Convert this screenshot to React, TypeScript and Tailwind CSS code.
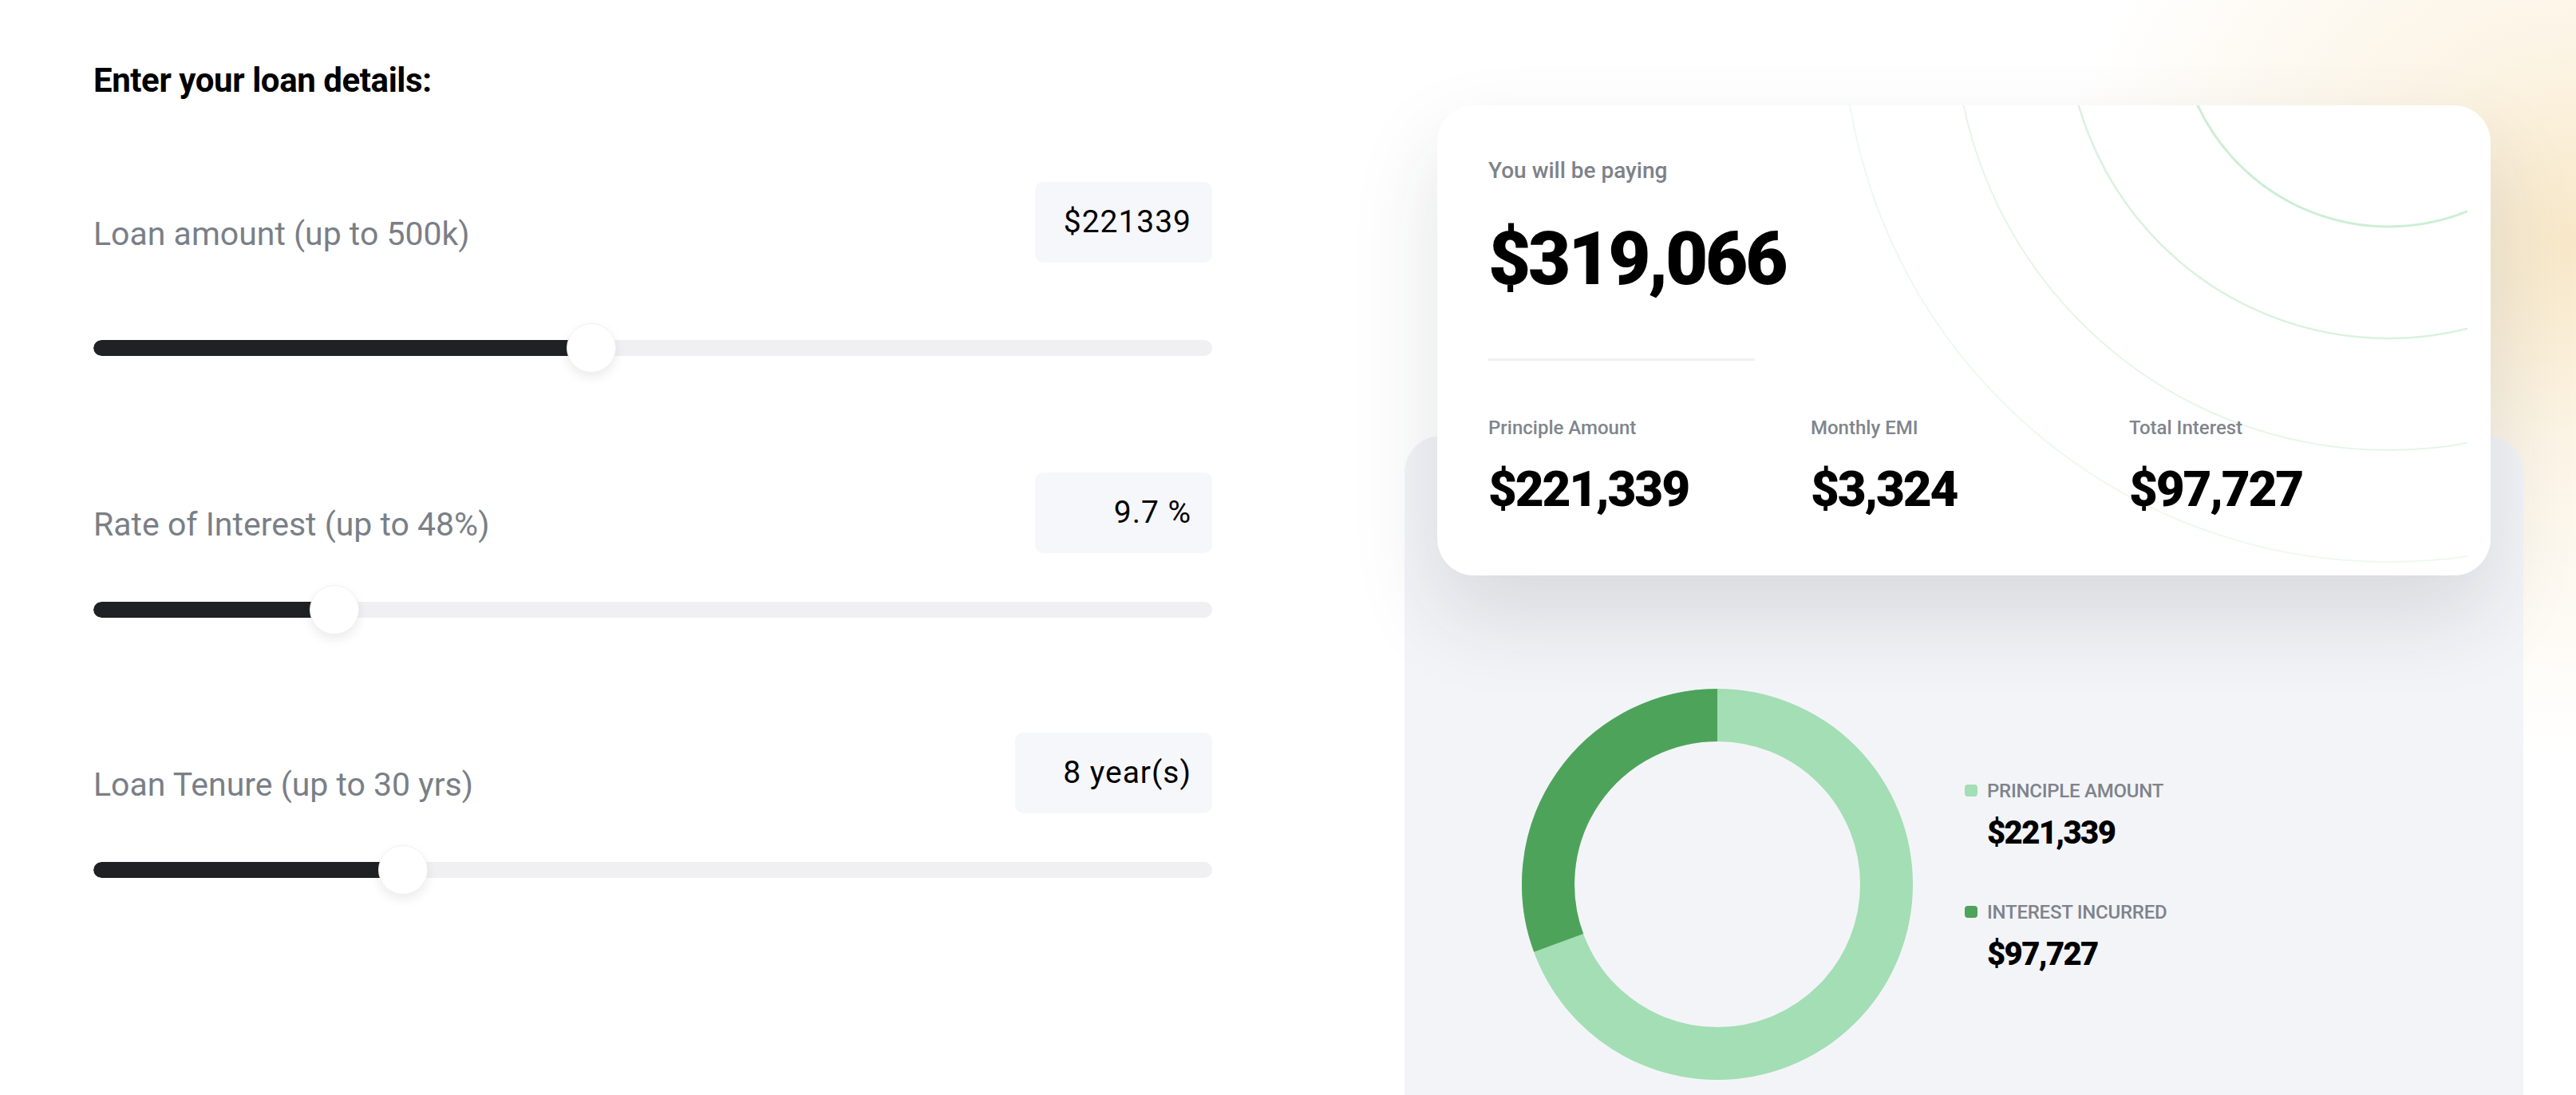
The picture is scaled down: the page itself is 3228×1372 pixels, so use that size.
import React from "react";

const font = { fontFamily: "Roboto, 'Liberation Sans', sans-serif" };

function Slider({ value, max }: { value: number; max: number }) {
  const frac = value / max;
  const center = 31 + frac * (1402 - 62);
  return (
    <div className="relative h-[62px] w-[1402px] flex items-center">
      <div className="h-[20px] w-full rounded-full bg-[#f0f0f2] overflow-hidden">
        <div className="h-full bg-[#202124] rounded-l-full" style={{ width: center }} />
      </div>
      <div
        className="absolute top-0 h-[62px] w-[62px] rounded-full bg-white border border-[#f1f1f3] shadow-[0_6px_14px_rgba(0,0,0,0.08)]"
        style={{ left: center - 31 }}
      />
    </div>
  );
}

function Field({ label, value, width }: { label: string; value: string; width: number }) {
  return (
    <div className="flex items-center justify-between">
      <span className="pt-[30px] text-[41px] text-[#7a7f87]">{label}</span>
      <div
        className="h-[101px] rounded-[10px] bg-[#f6f7fb] flex items-center justify-end pr-[26px] text-[39px] text-black tracking-wide"
        style={{ width }}
      >
        {value}
      </div>
    </div>
  );
}

function Donut() {
  const cx = 260;
  const cy = 260;
  const r = 212;
  const frac = 97727 / 319066;
  const a = ((90 + frac * 360) * Math.PI) / 180;
  const x = cx + r * Math.cos(a);
  const y = cy - r * Math.sin(a);
  return (
    <svg width="520" height="520" viewBox="0 0 520 520">
      <circle cx={cx} cy={cy} r={r} fill="none" stroke="#a3deb4" strokeWidth="66" />
      <path d={`M ${cx} ${cy - r} A ${r} ${r} 0 0 0 ${x} ${y}`} fill="none" stroke="#4ea35b" strokeWidth="66" />
    </svg>
  );
}

function Stat({ label, value, width }: { label: string; value: string; width: number }) {
  return (
    <div className="flex flex-col" style={{ width }}>
      <span className="text-[24px] font-medium text-[#80858d] leading-[28px]">{label}</span>
      <span className="mt-[32px] text-[62px] font-black text-black leading-none tracking-[-0.035em]">{value}</span>
    </div>
  );
}

function Legend({ color, label, value }: { color: string; label: string; value: string }) {
  return (
    <div className="flex items-start gap-[12px]">
      <div className="mt-[1px] h-[15px] w-[16px] rounded-[4px]" style={{ background: color }} />
      <div className="flex flex-col">
        <span className="text-[24px] font-medium text-[#7e838b] leading-[18px] tracking-[-0.01em]">{label}</span>
        <span className="mt-[24px] text-[40px] font-black text-black leading-none tracking-[-0.04em]">{value}</span>
      </div>
    </div>
  );
}

export default function App() {
  return (
    <div
      className="relative w-[3228px] h-[1372px] overflow-hidden bg-white bg-[radial-gradient(circle_650px_at_100%_22%,#f8e8c8_0%,rgba(250,238,214,0.6)_40%,rgba(255,255,255,0)_100%)] flex"
      style={font}
    >
      <div className="pl-[117px] w-[1519px] shrink-0 flex flex-col">
        <h1 className="pt-[77px] text-[42px] leading-[48px] font-bold text-black tracking-[-0.01em]">Enter your loan details:</h1>
        <div className="mt-[103px]">
          <Field label="Loan amount (up to 500k)" value="$221339" width={222} />
        </div>
        <div className="mt-[76px]">
          <Slider value={221339} max={500000} />
        </div>
        <div className="mt-[125px]">
          <Field label="Rate of Interest (up to 48%)" value="9.7 %" width={222} />
        </div>
        <div className="mt-[40px]">
          <Slider value={9.7} max={48} />
        </div>
        <div className="mt-[123px]">
          <Field label="Loan Tenure (up to 30 yrs)" value="8 year(s)" width={247} />
        </div>
        <div className="mt-[40px]">
          <Slider value={8} max={30} />
        </div>
      </div>

      <div className="ml-[241px] w-[1402px] shrink-0 flex flex-col">
        <div className="relative z-10 mx-[41px] mt-[132px] h-[589px] rounded-[46px] bg-white overflow-hidden shadow-[0_50px_110px_rgba(30,35,50,0.13)]">
          <svg className="absolute left-0 top-0" width="1291" height="589" viewBox="0 0 1291 589">
            <circle cx="1192" cy="-112" r="264" fill="none" stroke="#cdeed4" strokeWidth="3" />
            <circle cx="1192" cy="-112" r="404" fill="none" stroke="#d9f2dd" strokeWidth="2.5" />
            <circle cx="1192" cy="-112" r="544" fill="none" stroke="#e4f6e7" strokeWidth="2" />
            <circle cx="1192" cy="-112" r="684" fill="none" stroke="#eef9f0" strokeWidth="2" />
          </svg>
          <div className="relative pl-[64px] pt-[66px] flex flex-col">
            <span className="text-[28px] font-medium text-[#7d8289] leading-[32px]">You will be paying</span>
            <span className="mt-[49px] text-[92px] font-black text-black leading-none tracking-[-0.035em]">$319,066</span>
            <div className="mt-[78px] h-[3px] w-[334px] bg-[#f0f1f3]" />
            <div className="mt-[70px] flex">
              <Stat label="Principle Amount" value="$221,339" width={404} />
              <Stat label="Monthly EMI" value="$3,324" width={399} />
              <Stat label="Total Interest" value="$97,727" width={300} />
            </div>
          </div>
        </div>
        <div className="-mt-[175px] flex-1 rounded-t-[46px] bg-[#f3f4f8] pl-[147px] pt-[317px]">
          <div className="flex items-center gap-[65px]">
            <div className="-m-[15px]">
              <Donut />
            </div>
            <div className="flex flex-col gap-[70px] mt-[-18px]">
              <Legend color="#a3deb4" label="PRINCIPLE AMOUNT" value="$221,339" />
              <Legend color="#4ea35b" label="INTEREST INCURRED" value="$97,727" />
            </div>
          </div>
        </div>
      </div>
    </div>
  );
}
